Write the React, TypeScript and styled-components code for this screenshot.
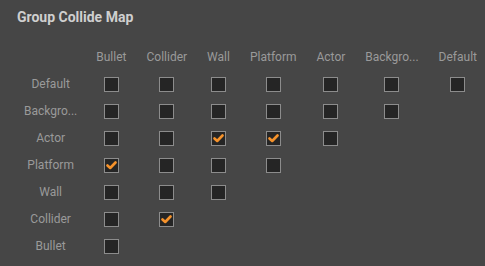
import React from 'react';
import styled, { createGlobalStyle } from 'styled-components';

const GROUPS = ['Default', 'Backgro...', 'Actor', 'Platform', 'Wall', 'Collider', 'Bullet'];
const COLUMNS = [...GROUPS].reverse();

// which pairs collide: key is `${row}|${col}`
const CHECKED = new Set(['Actor|Wall', 'Actor|Platform', 'Platform|Bullet', 'Collider|Collider']);

const GlobalStyle = createGlobalStyle`
  html, body {
    margin: 0;
    padding: 0;
    background: #464646;
  }
`;

const SPanel = styled.div`
  width: 485px;
  height: 266px;
  box-sizing: border-box;
  padding: 8px 0 0 17px;
  background: #464646;
  font-family: Roboto, "Liberation Sans", sans-serif;
  overflow: hidden;
`;

const STitle = styled.div`
  color: #cfcfcf;
  font-size: 14px;
  font-weight: bold;
  line-height: 18px;
`;

const STable = styled.table`
  margin: 23px 0 0 -2px;
  border-collapse: collapse;
`;

const SHead = styled.th`
  color: #9a9a9a;
  font-size: 12px;
  font-weight: normal;
  line-height: 16px;
  padding: 0 10px 5px;
  text-align: center;
  white-space: nowrap;

  &:first-child {
    padding: 0 9px 5px;
  }
`;

const SRowLabel = styled.td`
  color: #9a9a9a;
  font-size: 12px;
  line-height: 16px;
  height: 27px;
  padding: 0 9px;
  text-align: center;
  white-space: nowrap;
`;

const SCell = styled.td`
  padding: 0 10px;
  text-align: center;
  vertical-align: middle;
`;

const SBox = styled.span`
  display: inline-flex;
  align-items: center;
  justify-content: center;
  width: 15px;
  height: 15px;
  box-sizing: border-box;
  border: 1px solid #8c8c8c;
  background: #252525;
  vertical-align: middle;
`;

const Check = () => (
  <svg width="11" height="9" viewBox="0 0 11 9">
    <path d="M1.5 4.5 L4.2 7 L9.5 1.5" fill="none" stroke="#f5922b" strokeWidth="2.6" strokeLinecap="round" strokeLinejoin="round" />
  </svg>
);

export default function App() {
  return (
    <SPanel>
      <GlobalStyle />
      <STitle>Group Collide Map</STitle>
      <STable>
        <thead>
          <tr>
            <SHead />
            {COLUMNS.map((c) => (
              <SHead key={c}>{c}</SHead>
            ))}
          </tr>
        </thead>
        <tbody>
          {GROUPS.map((row, i) => (
            <tr key={row}>
              <SRowLabel>{row}</SRowLabel>
              {COLUMNS.map((col, j) => (
                <SCell key={col}>
                  {j < GROUPS.length - i && (
                    <SBox>{CHECKED.has(`${row}|${col}`) && <Check />}</SBox>
                  )}
                </SCell>
              ))}
            </tr>
          ))}
        </tbody>
      </STable>
    </SPanel>
  );
}
